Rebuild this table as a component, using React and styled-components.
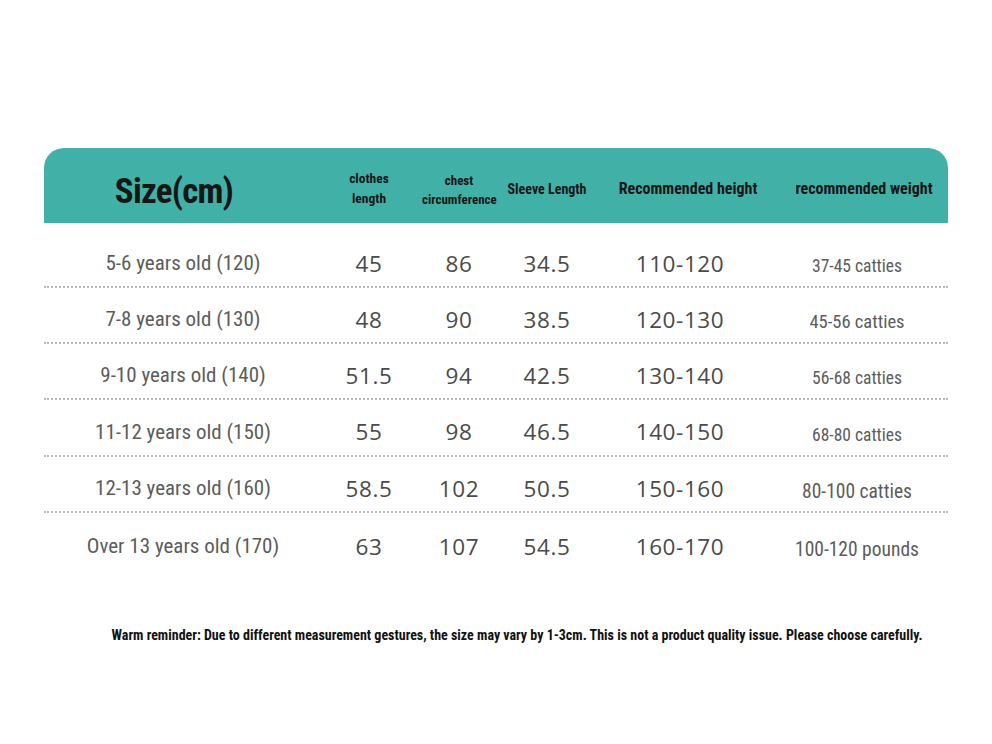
import React from "react";
import styled, { createGlobalStyle } from "styled-components";

const GlobalStyle = createGlobalStyle`
  html, body {
    margin: 0;
    padding: 0;
    background: #ffffff;
  }
  body {
    width: 992px;
    height: 744px;
    overflow: hidden;
  }
`;

const cols = "272px 106px 74px 102px 172px 178px";
const narrow = `"Roboto Condensed", "Open Sans", sans-serif`;

const Page = styled.div`
  width: 992px;
  height: 744px;
  padding-top: 148px;
  box-sizing: border-box;
  display: flex;
  flex-direction: column;
  align-items: center;
`;

const Table = styled.div`
  width: 904px;
  display: flex;
  flex-direction: column;
`;

const Header = styled.div`
  display: grid;
  grid-template-columns: ${cols};
  height: 75px;
  background: #41b1a7;
  border-radius: 20px 20px 0 0;
  align-items: center;
`;

const HeadCell = styled.div`
  text-align: center;
  font-family: ${narrow};
  font-weight: bold;
  color: #161616;
  font-size: ${p => p.size}px;
  line-height: ${p => p.size + 6}px;
  padding-top: ${p => p.offset || 0}px;
  padding-left: ${p => p.shift || 0}px;
  white-space: nowrap;
`;

const Title = styled(HeadCell)`
  line-height: 42px;
  padding-top: 12px;
  padding-right: 12px;
  letter-spacing: -0.8px;
`;

const Row = styled.div`
  display: grid;
  grid-template-columns: ${cols};
  align-items: center;
  height: ${p => p.h}px;
  padding-top: ${p => p.pt}px;
  box-sizing: border-box;
  border-bottom: ${p => (p.last ? "none" : "2px dotted #b8b8b8")};
`;

const Label = styled.div`
  text-align: center;
  font-family: ${narrow};
  font-size: 21px;
  color: #5c5c5c;
  padding-left: 6px;
  white-space: nowrap;
`;

const Num = styled.div`
  text-align: center;
  font-family: "Open Sans", "DejaVu Sans", sans-serif;
  font-size: 22.5px;
  color: #4a4a4a;
  letter-spacing: 0.6px;
  padding-right: ${p => p.shift || 0}px;
`;

const Weight = styled(Label)`
  font-size: ${p => p.size}px;
  padding-top: 6px;
  padding-left: 0;
  padding-right: 4px;
`;

const Note = styled.div`
  margin-top: 56px;
  padding-left: 42px;
  font-family: ${narrow};
  font-weight: bold;
  font-size: 14px;
  color: #111;
  white-space: nowrap;
`;

const rows = [
  ["5-6 years old (120)", "45", "86", "34.5", "110-120", "37-45 catties", 17.5],
  ["7-8 years old (130)", "48", "90", "38.5", "120-130", "45-56 catties", 18.5],
  ["9-10 years old (140)", "51.5", "94", "42.5", "130-140", "56-68 catties", 17.5],
  ["11-12 years old (150)", "55", "98", "46.5", "140-150", "68-80 catties", 17.5],
  ["12-13 years old (160)", "58.5", "102", "50.5", "150-160", "80-100 catties", 19.5],
  ["Over 13 years old (170)", "63", "107", "54.5", "160-170", "100-120 pounds", 19.5],
];

const heights = [65, 56, 56, 57, 56, 58];

export default function App() {
  return (
    <Page>
      <GlobalStyle />
      <Table>
        <Header>
          <Title size={35}>Size(cm)</Title>
          <HeadCell size={13.5} offset={6}>
            clothes
            <br />
            length
          </HeadCell>
          <HeadCell size={13} offset={8}>
            chest
            <br />
            circumference
          </HeadCell>
          <HeadCell size={14} offset={6}>Sleeve Length</HeadCell>
          <HeadCell size={16} offset={7} shift={8}>Recommended height</HeadCell>
          <HeadCell size={16} offset={7} shift={10}>recommended weight</HeadCell>
        </Header>
        {rows.map((r, i) => (
          <Row key={i} h={heights[i]} pt={i === 0 ? 17 : 8} last={i === rows.length - 1}>
            <Label>{r[0]}</Label>
            <Num>{r[1]}</Num>
            <Num>{r[2]}</Num>
            <Num>{r[3]}</Num>
            <Num shift={8}>{r[4]}</Num>
            <Weight size={r[6]}>{r[5]}</Weight>
          </Row>
        ))}
      </Table>
      <Note>
        Warm reminder: Due to different measurement gestures, the size may vary by 1-3cm. This is not a
        product quality issue. Please choose carefully.
      </Note>
    </Page>
  );
}
